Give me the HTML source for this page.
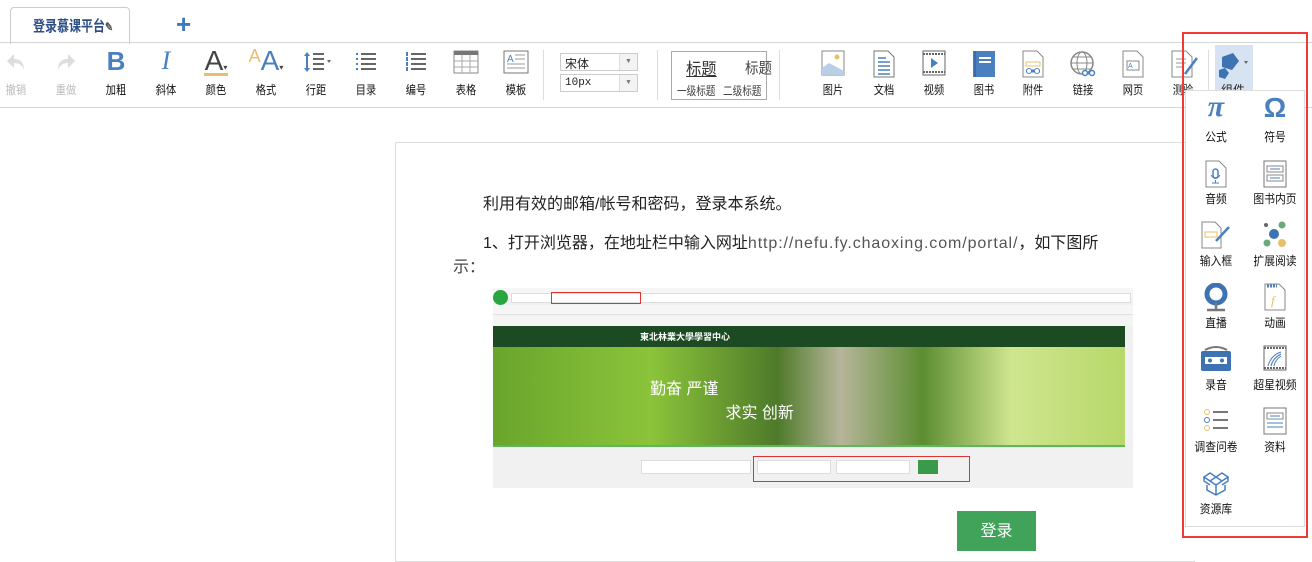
<!DOCTYPE html>
<html><head><meta charset="utf-8"><style>
*{margin:0;padding:0;box-sizing:border-box}
body{width:1312px;height:549px;overflow:hidden;background:#fff;font-family:"Liberation Sans","Noto Sans CJK SC",sans-serif;position:relative;color:#222}
.a{position:absolute}
.lbl{position:absolute;font-size:12px;color:#111;transform:translateX(-50%) scaleX(0.85);white-space:nowrap;top:81px}
.ic{position:absolute;top:50px;transform:translateX(-50%)}
.dl{position:absolute;font-size:12px;color:#111;transform:translateX(-50%) scaleX(0.9);white-space:nowrap}
.di{position:absolute;transform:translateX(-50%)}
</style></head><body>
<!-- tab -->
<div class="a" style="left:10px;top:7px;width:120px;height:37px;border:1px solid #ccc;border-bottom:none;border-radius:4px 4px 0 0;background:#fff"></div>
<div class="a" style="left:33px;top:15px;font-size:15px;color:#2e4f86;font-weight:bold;transform-origin:0 0;transform:scaleX(0.8);white-space:nowrap">登录慕课平台<span style="font-size:12px;color:#555">✎</span></div>
<div class="a" style="left:176px;top:9px;font-size:26px;color:#3d78c0;font-weight:bold">+</div>
<div class="a" style="left:0;top:42px;width:1312px;height:1px;background:#d5d5d5"></div>
<div class="a" style="left:0;top:107px;width:1312px;height:1px;background:#d5d5d5"></div>

<!-- toolbar icons -->
<svg class="ic" style="left:16px" width="24" height="24" viewBox="0 0 24 24"><path d="M10 4 L3 11 L10 18 V13 C15 13 18 15 20 20 C20 12 16 9 10 9Z" fill="#ddd"/></svg>
<div class="lbl" style="left:16px;color:#bbb">撤销</div>
<svg class="ic" style="left:66px" width="24" height="24" viewBox="0 0 24 24"><path d="M14 4 L21 11 L14 18 V13 C9 13 6 15 4 20 C4 12 8 9 14 9Z" fill="#ddd"/></svg>
<div class="lbl" style="left:66px;color:#bbb">重做</div>
<div class="ic" style="left:116px;top:46px;font-size:26px;font-weight:bold;color:#4a80c0">B</div><div class="lbl" style="left:116px">加粗</div>
<div class="ic" style="left:166px;top:46px;font-size:26px;font-style:italic;font-family:'Liberation Serif';color:#4a80c0">I</div><div class="lbl" style="left:166px">斜体</div>
<div class="ic" style="left:216px;top:45px;font-size:28px;color:#444">A<span style="font-size:8px">▾</span></div><div class="a" style="left:204px;top:73px;width:24px;height:3px;background:#e8c06a"></div><div class="lbl" style="left:216px">颜色</div>
<div class="ic" style="left:266px;top:45px;font-size:28px;color:#4a80c0"><span style="font-size:18px;color:#e8c06a;position:relative;top:-8px">A</span>A<span style="font-size:8px;color:#444">▾</span></div><div class="lbl" style="left:266px">格式</div>
<svg class="ic" style="left:318px" width="30" height="24" viewBox="0 0 30 24"><path d="M4 3 V21" stroke="#4a80c0" stroke-width="2"/><path d="M1 6 L4 2 L7 6 M1 18 L4 22 L7 18" fill="#4a80c0"/><path d="M10 4 H21 M10 9 H21 M10 14 H21 M10 19 H21" stroke="#666" stroke-width="2"/><path d="M24 10 L28 10 L26 13Z" fill="#666"/></svg><div class="lbl" style="left:316px">行距</div>
<svg class="ic" style="left:366px" width="24" height="24" viewBox="0 0 24 24"><g stroke="#666" stroke-width="2"><path d="M7 4 H22 M7 9 H22 M7 14 H22 M7 19 H22"/></g><g fill="#4a80c0"><rect x="2" y="3" width="2" height="2"/><rect x="2" y="8" width="2" height="2"/><rect x="2" y="13" width="2" height="2"/><rect x="2" y="18" width="2" height="2"/></g></svg><div class="lbl" style="left:366px">目录</div>
<svg class="ic" style="left:416px" width="24" height="24" viewBox="0 0 24 24"><g stroke="#666" stroke-width="2"><path d="M7 4 H22 M7 9 H22 M7 14 H22 M7 19 H22"/></g><g fill="#4a80c0"><rect x="2" y="2" width="2" height="4"/><rect x="2" y="7" width="2" height="4"/><rect x="2" y="12" width="2" height="4"/><rect x="2" y="17" width="2" height="4"/></g></svg><div class="lbl" style="left:416px">编号</div>
<svg class="ic" style="left:466px" width="26" height="24" viewBox="0 0 26 24"><rect x="1" y="1" width="24" height="22" fill="#fff" stroke="#888"/><rect x="1" y="1" width="24" height="4" fill="#777"/><path d="M1 11 H25 M1 17 H25 M9 5 V23 M17 5 V23" stroke="#aaa"/></svg><div class="lbl" style="left:466px">表格</div>
<svg class="ic" style="left:516px" width="26" height="24" viewBox="0 0 26 24"><rect x="1" y="1" width="24" height="22" fill="#fff" stroke="#777"/><text x="4" y="12" font-size="10" fill="#4a80c0" font-family="Liberation Sans">A</text><path d="M12 5 H22 M12 9 H22 M4 14 H22 M4 18 H22" stroke="#999"/></svg><div class="lbl" style="left:516px">模板</div>
<div class="a" style="left:543px;top:50px;width:1px;height:50px;background:#ddd"></div>
<div class="a" style="left:560px;top:53px;width:78px;height:18px;border:1px solid #ccc;font-size:12px;padding:1px 4px">宋体<span style="position:absolute;right:0;top:0;width:18px;height:16px;background:#f3f3f3;border-left:1px solid #ddd;font-size:7px;color:#777;text-align:center;line-height:16px">▼</span></div>
<div class="a" style="left:560px;top:74px;width:78px;height:18px;border:1px solid #ccc;font-size:11px;padding:2px 4px;font-family:'Liberation Mono'">10px<span style="position:absolute;right:0;top:0;width:18px;height:16px;background:#f3f3f3;border-left:1px solid #ddd;font-size:7px;color:#777;text-align:center;line-height:16px">▼</span></div>
<div class="a" style="left:657px;top:50px;width:1px;height:50px;background:#ddd"></div>
<div class="a" style="left:671px;top:51px;width:96px;height:49px;border:1px solid #aaa"></div>
<div class="a" style="left:686px;top:55px;font-size:17px;color:#333;text-decoration:underline;transform-origin:0 0;transform:scaleX(0.9)">标题</div>
<div class="a" style="left:745px;top:57px;font-size:15px;color:#444;transform-origin:0 0;transform:scaleX(0.9)">标题</div>
<div class="a" style="left:677px;top:82px;font-size:12px;color:#444;transform-origin:0 0;transform:scaleX(0.8);white-space:nowrap">一级标题</div>
<div class="a" style="left:723px;top:82px;font-size:12px;color:#444;transform-origin:0 0;transform:scaleX(0.8);white-space:nowrap">二级标题</div>
<div class="a" style="left:779px;top:50px;width:1px;height:50px;background:#ddd"></div>
<svg class="ic" style="left:833px" width="24" height="26" viewBox="0 0 24 26"><rect x="1" y="1" width="22" height="24" fill="#fff" stroke="#888"/><circle cx="16" cy="7" r="2.5" fill="#e8c06a"/><path d="M1 25 L1 18 L8 13 L23 21 L23 25Z" fill="#b9cfe6"/></svg><div class="lbl" style="left:833px">图片</div>
<svg class="ic" style="left:884px" width="22" height="28" viewBox="0 0 22 28"><path d="M1 1 H15 L21 7 V27 H1Z" fill="#fff" stroke="#777"/><path d="M5 8 H13 M5 12 H17 M5 16 H17 M5 20 H17 M5 24 H17" stroke="#4a80c0" stroke-width="1.5"/></svg><div class="lbl" style="left:884px">文档</div>
<svg class="ic" style="left:934px" width="24" height="26" viewBox="0 0 24 26"><rect x="1" y="1" width="22" height="24" fill="#fff" stroke="#666"/><path d="M1 4 H23 M1 22 H23" stroke="#666" stroke-width="2" stroke-dasharray="2 1"/><path d="M9 8 L16 13 L9 18Z" fill="#4a80c0"/></svg><div class="lbl" style="left:934px">视频</div>
<svg class="ic" style="left:984px" width="24" height="28" viewBox="0 0 24 28"><rect x="1" y="1" width="22" height="26" fill="#4a80c0"/><path d="M3 1 V27" stroke="#2d5a94"/><path d="M7 8 H19 M7 12 H19" stroke="#fff" stroke-width="2"/></svg><div class="lbl" style="left:984px">图书</div>
<svg class="ic" style="left:1033px" width="22" height="28" viewBox="0 0 22 28"><path d="M1 1 H15 L21 7 V27 H1Z" fill="#fff" stroke="#888"/><rect x="4" y="12" width="14" height="4" fill="#fff" stroke="#e8c06a"/><path d="M4 21 H18" stroke="#4a80c0" stroke-width="3"/><circle cx="7" cy="21" r="2.5" fill="#fff" stroke="#4a80c0"/><circle cx="15" cy="21" r="2.5" fill="#fff" stroke="#4a80c0"/></svg><div class="lbl" style="left:1033px">附件</div>
<svg class="ic" style="left:1083px" width="28" height="28" viewBox="0 0 28 28"><circle cx="13" cy="13" r="11" fill="none" stroke="#888" stroke-width="1.5"/><ellipse cx="13" cy="13" rx="5" ry="11" fill="none" stroke="#888"/><path d="M2 13 H24 M4 7 H22 M4 19 H22" stroke="#888"/><path d="M14 23 H25" stroke="#4a80c0" stroke-width="3"/><circle cx="16" cy="23" r="2.5" fill="#fff" stroke="#4a80c0" stroke-width="1.5"/><circle cx="23" cy="23" r="2.5" fill="#fff" stroke="#4a80c0" stroke-width="1.5"/></svg><div class="lbl" style="left:1083px">链接</div>
<svg class="ic" style="left:1133px" width="22" height="28" viewBox="0 0 22 28"><path d="M1 1 H15 L21 7 V27 H1Z" fill="#fff" stroke="#888"/><rect x="5" y="11" width="12" height="9" fill="none" stroke="#888"/><text x="6" y="18" font-size="7" fill="#4a80c0">A</text></svg><div class="lbl" style="left:1133px">网页</div>
<svg class="ic" style="left:1185px" width="28" height="28" viewBox="0 0 28 28"><path d="M1 1 H15 L21 7 V27 H1Z" fill="#fff" stroke="#888"/><path d="M5 9 H15 M5 13 H15 M5 17 H13" stroke="#999"/><path d="M14 24 L26 8" stroke="#4a80c0" stroke-width="2.5"/></svg><div class="lbl" style="left:1183px">测验</div>
<div class="a" style="left:1208px;top:50px;width:1px;height:40px;background:#ddd"></div>
<div class="a" style="left:1215px;top:45px;width:38px;height:46px;background:#d7e2f2"></div>
<svg class="a" style="left:1217px;top:52px" width="34" height="30" viewBox="0 0 34 30"><path d="M5 5 L16 1 L22 9 L15 18 L5 15Z" fill="#3d73b3"/><path d="M2 18 L8 16 L12 21 L8 27 L2 25Z" fill="#3d73b3"/><path d="M27 9 L31 9 L29 12Z" fill="#666"/></svg>
<div class="a" style="left:1221px;top:81px;font-size:12px;height:9px;overflow:hidden;line-height:18px">组件</div>

<!-- content page -->
<div class="a" style="left:395px;top:142px;width:800px;height:420px;border:1px solid #ddd;border-right:none"></div>
<div class="a" style="left:483px;top:190px;font-size:16px;color:#222">利用有效的邮箱/帐号和密码，登录本系统。</div>
<div class="a" style="left:483px;top:229px;font-size:16px;color:#222;white-space:nowrap">1、打开浏览器，在地址栏中输入网址<span style="color:#555;letter-spacing:0.9px">http://nefu.fy.chaoxing.com/portal/</span>，如下图所</div>
<div class="a" style="left:453px;top:253px;font-size:16px;color:#444">示：</div>
<!-- screenshot image -->
<div class="a" style="left:493px;top:288px;width:640px;height:200px;background:#f1f1f1;overflow:hidden">
 <div class="a" style="left:0;top:0;width:640px;height:11px;background:#f6f6f6"></div>
 <div class="a" style="left:0;top:2px;width:15px;height:15px;border-radius:50%;background:#2aa640"></div>
 <div class="a" style="left:18px;top:5px;width:620px;height:10px;background:#fff;border:1px solid #ddd"></div>
 <div class="a" style="left:58px;top:4px;width:90px;height:12px;border:1px solid #d33"></div>
 <div class="a" style="left:0;top:17px;width:640px;height:10px;background:#f6f6f6;border-bottom:1px solid #e3e3e3"></div>
 <div class="a" style="left:0;top:28px;width:640px;height:10px;background:#f4f4f4"></div>
 <div class="a" style="left:0;top:38px;width:632px;height:21px;background:#1c4a22"></div>
 <div class="a" style="left:147px;top:42px;font-size:9px;color:#fff;font-weight:bold">東北林業大學學習中心</div>
 <div class="a" style="left:0;top:59px;width:632px;height:98px;background:linear-gradient(90deg,#6aa52c 0%,#8bc43a 25%,#4e7a2a 45%,#b6b59a 55%,#5c8d31 68%,#cfe68f 82%,#b7d86a 100%)"></div>
 <div class="a" style="left:157px;top:87px;font-size:16px;color:#fff">勤奋 严谨</div>
 <div class="a" style="left:228px;top:111px;font-size:16px;color:#fff;left:228px">&nbsp;求实 创新</div>
 <div class="a" style="left:0;top:157px;width:632px;height:2px;background:#5cb85c"></div>
 <div class="a" style="left:148px;top:172px;width:110px;height:14px;background:#fff;border:1px solid #ddd"></div>
 <div class="a" style="left:260px;top:168px;width:217px;height:26px;border:1px solid #d33"></div>
 <div class="a" style="left:264px;top:172px;width:74px;height:14px;background:#fff;border:1px solid #ddd"></div>
 <div class="a" style="left:343px;top:172px;width:74px;height:14px;background:#fff;border:1px solid #ddd"></div>
 <div class="a" style="left:425px;top:172px;width:20px;height:14px;background:#3a9a4a"></div>
</div>
<div class="a" style="left:957px;top:511px;width:79px;height:40px;background:#41a259;color:#fff;font-size:16px;text-align:center;line-height:42px">登录</div>

<!-- dropdown -->
<div class="a" style="left:1185px;top:90px;width:120px;height:437px;background:#fff;border:1px solid #ddd"></div>
<div class="di" style="left:1216px;top:90px;font-size:30px;font-style:italic;color:#4a80c0;font-family:'Liberation Serif';font-weight:bold">π</div><div class="dl" style="left:1216px;top:128px">公式</div>
<div class="di" style="left:1275px;top:92px;font-size:28px;color:#4a80c0;font-family:'Liberation Sans';font-weight:bold">Ω</div><div class="dl" style="left:1275px;top:128px">符号</div>
<svg class="di" style="left:1216px;top:160px" width="22" height="28" viewBox="0 0 22 28"><path d="M1 1 H14 L21 8 V27 H1Z" fill="#fff" stroke="#888"/><rect x="8" y="9" width="5" height="9" rx="2.5" fill="none" stroke="#4a80c0" stroke-width="1.5"/><path d="M6 15 Q10.5 22 15 15 M10.5 20 V23 M7 23 H14" stroke="#4a80c0" fill="none"/></svg><div class="dl" style="left:1216px;top:190px">音频</div>
<svg class="di" style="left:1275px;top:160px" width="24" height="28" viewBox="0 0 24 28"><rect x="1" y="1" width="22" height="26" fill="#fff" stroke="#777"/><rect x="4" y="6" width="16" height="6" fill="none" stroke="#888"/><rect x="4" y="15" width="16" height="6" fill="none" stroke="#888"/><path d="M7 9 H17 M7 18 H17" stroke="#4a80c0"/></svg><div class="dl" style="left:1275px;top:190px">图书内页</div>
<svg class="di" style="left:1216px;top:221px" width="30" height="28" viewBox="0 0 30 28"><path d="M1 1 H14 L20 7 V27 H1Z" fill="#fff" stroke="#888"/><rect x="4" y="11" width="12" height="5" fill="#fff" stroke="#e8c06a"/><path d="M15 20 L28 6" stroke="#4a80c0" stroke-width="2.5"/></svg><div class="dl" style="left:1216px;top:252px">输入框</div>
<svg class="di" style="left:1275px;top:221px" width="28" height="28" viewBox="0 0 28 28"><circle cx="5" cy="4" r="2" fill="#666"/><circle cx="21" cy="4" r="3.5" fill="#6aaa7a"/><circle cx="13" cy="13" r="5" fill="#3d73b3"/><circle cx="6" cy="22" r="3.5" fill="#6aaa7a"/><circle cx="21" cy="22" r="4" fill="#e8c06a"/></svg><div class="dl" style="left:1275px;top:252px">扩展阅读</div>
<svg class="di" style="left:1216px;top:283px" width="26" height="30" viewBox="0 0 26 30"><circle cx="13" cy="11" r="9" fill="none" stroke="#3d73b3" stroke-width="5"/><path d="M13 20 V27 M4 27 H22" stroke="#777" stroke-width="2.5"/></svg><div class="dl" style="left:1216px;top:314px">直播</div>
<svg class="di" style="left:1275px;top:283px" width="22" height="28" viewBox="0 0 22 28"><path d="M1 1 H15 L21 7 V27 H1Z" fill="#fff" stroke="#888"/><path d="M3 3 H13" stroke="#4a80c0" stroke-width="3" stroke-dasharray="2 1"/><text x="7" y="22" font-size="13" font-style="italic" fill="#e8c06a" font-family="Liberation Serif">f</text></svg><div class="dl" style="left:1275px;top:314px">动画</div>
<svg class="di" style="left:1216px;top:345px" width="32" height="28" viewBox="0 0 32 28"><path d="M5 5 Q16 -1 27 5" stroke="#777" stroke-width="2" fill="none"/><rect x="1" y="6" width="30" height="20" rx="2" fill="#3d73b3"/><rect x="5" y="12" width="22" height="7" fill="#fff"/><circle cx="10" cy="15.5" r="2" fill="#3d73b3"/><circle cx="22" cy="15.5" r="2" fill="#3d73b3"/></svg><div class="dl" style="left:1216px;top:376px">录音</div>
<svg class="di" style="left:1275px;top:345px" width="24" height="26" viewBox="0 0 24 26"><rect x="1" y="1" width="22" height="24" fill="#fff" stroke="#666"/><path d="M1 3 H23 M1 23 H23" stroke="#666" stroke-width="2" stroke-dasharray="2 1"/><path d="M5 21 Q8 10 18 7 M8 21 Q10 13 18 9 M11 21 Q12 15 18 11" stroke="#4a80c0" fill="none"/></svg><div class="dl" style="left:1275px;top:376px">超星视频</div>
<svg class="di" style="left:1216px;top:408px" width="26" height="24" viewBox="0 0 26 24"><circle cx="4" cy="4" r="2.5" fill="none" stroke="#e8c06a"/><circle cx="4" cy="12" r="2.5" fill="none" stroke="#4a80c0"/><circle cx="4" cy="20" r="2.5" fill="none" stroke="#e8c06a"/><path d="M10 4 H25 M10 12 H25 M10 20 H25" stroke="#777" stroke-width="2"/></svg><div class="dl" style="left:1216px;top:438px">调查问卷</div>
<svg class="di" style="left:1275px;top:407px" width="24" height="28" viewBox="0 0 24 28"><rect x="1" y="1" width="22" height="26" fill="#fff" stroke="#777"/><rect x="4" y="6" width="16" height="6" fill="none" stroke="#888"/><path d="M7 9 H17 M4 16 H20 M4 20 H20" stroke="#4a80c0"/></svg><div class="dl" style="left:1275px;top:438px">资料</div>
<svg class="di" style="left:1216px;top:471px" width="26" height="26" viewBox="0 0 26 26"><g fill="none" stroke="#4a80c0" stroke-width="1.5"><path d="M7 2 L13 6 L7 10 L1 6Z M19 2 L25 6 L19 10 L13 6Z M7 10 L13 14 L19 10 M1 6 V10 L7 14 M25 6 V10 L19 14"/><path d="M4 14 V19 L13 24 L22 19 V14 M13 14 V24"/></g></svg><div class="dl" style="left:1216px;top:500px">资源库</div>

<!-- red box -->
<div class="a" style="left:1182px;top:32px;width:126px;height:506px;border:2px solid #f03a3a"></div>
</body></html>
